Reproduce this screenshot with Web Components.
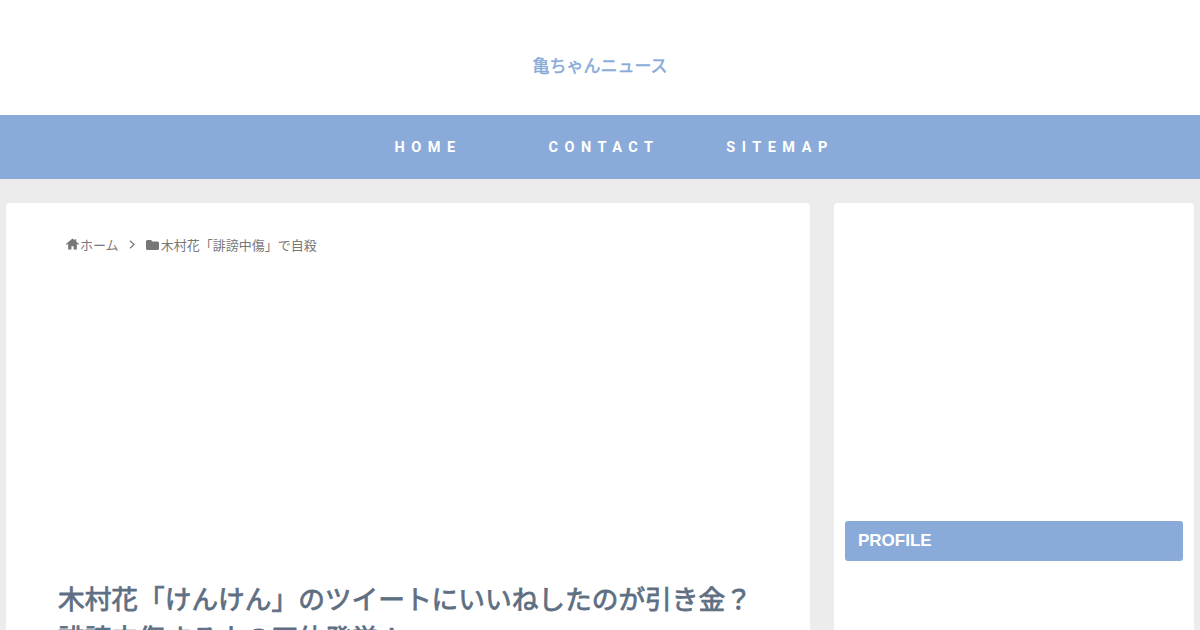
<!DOCTYPE html>
<html lang="ja">
<head>
<meta charset="utf-8">
<title>亀ちゃんニュース</title>
<style>
  html, body { margin: 0; height: 630px; overflow: hidden; }
  body { background: #ececec; font-family: "Liberation Sans", "Noto Sans CJK JP", sans-serif; }
</style>
</head>
<body>
<site-header>亀ちゃんニュース</site-header>
<nav-bar>
  <nav-item>HOME</nav-item>
  <nav-item>CONTACT</nav-item>
  <nav-item>SITEMAP</nav-item>
</nav-bar>
<page-layout>
  <main-card>
    <bread-crumb></bread-crumb>
    <h1 slot="title">木村花「けんけん」のツイートにいいねしたのが引き金？誹謗中傷する人の正体発覚！</h1>
  </main-card>
  <side-bar>
    <widget-title>PROFILE</widget-title>
  </side-bar>
</page-layout>

<script>
// Page header with the site name
class SiteHeader extends HTMLElement {
  constructor() {
    super();
    this.attachShadow({ mode: "open" }).innerHTML = `
      <style>
        :host {
          display: flex;
          justify-content: center;
          align-items: center;
          height: 115px;
          padding-top: 13px;
          box-sizing: border-box;
          background: #fff;
          color: #8aabd9;
          font-size: 17px;
          -webkit-text-stroke: 0.5px #8aabd9;
        }
      </style>
      <slot></slot>`;
  }
}

class NavBar extends HTMLElement {
  constructor() {
    super();
    this.attachShadow({ mode: "open" }).innerHTML = `
      <style>
        :host {
          display: flex;
          justify-content: center;
          height: 64px;
          padding-left: 8px;
          background: #8aabd9;
        }
      </style>
      <slot></slot>`;
  }
}

class NavItem extends HTMLElement {
  constructor() {
    super();
    this.attachShadow({ mode: "open" }).innerHTML = `
      <style>
        :host {
          display: flex;
          justify-content: center;
          align-items: center;
          width: 176px;
          color: #fff;
          font-family: Roboto, sans-serif;
          font-size: 14.5px;
          font-weight: 700;
          letter-spacing: 6.5px;
        }
      </style>
      <slot></slot>`;
  }
}

class PageLayout extends HTMLElement {
  constructor() {
    super();
    this.attachShadow({ mode: "open" }).innerHTML = `
      <style>
        :host {
          display: grid;
          grid-template-columns: 804px 360px;
          column-gap: 24px;
          padding: 24px 6px 0;
        }
      </style>
      <slot></slot>`;
  }
}

class MainCard extends HTMLElement {
  constructor() {
    super();
    this.attachShadow({ mode: "open" }).innerHTML = `
      <style>
        :host {
          display: block;
          height: 500px;
          box-sizing: border-box;
          padding: 31px 52px 0;
          background: #fff;
          border-radius: 4px;
        }
        ::slotted(h1) {
          margin: 327px 0 0;
          color: #5e6f83;
          font-size: 26.7px;
          line-height: 39px;
          font-weight: 400;
          -webkit-text-stroke: 0.8px #5e6f83;
        }
      </style>
      <slot></slot>
      <slot name="title"></slot>`;
  }
}

class BreadCrumb extends HTMLElement {
  constructor() {
    super();
    this.attachShadow({ mode: "open" }).innerHTML = `
      <style>
        :host {
          display: flex;
          align-items: center;
          height: 20px;
          padding-left: 8px;
          color: #777;
          font-size: 13px;
        }
        svg { flex: none; fill: #777; }
        .home { width: 13px; height: 12px; margin-right: 1px; }
        .chev { width: 6px; height: 9px; margin: 0 11px 0 10px; fill: none; stroke: #777; stroke-width: 1.2; }
        .folder { width: 13px; height: 11px; margin-right: 2px; }
      </style>
      <svg class="home" viewBox="0 0 24 22"><path d="M12 1 0 11l1.4 1.7L4 10.6V21h6v-6h4v6h6V10.6l2.6 2.1L24 11l-5-4.2V2h-3v2.3z"/></svg>
      <span>ホーム</span>
      <svg class="chev" viewBox="0 0 6 9"><path d="M1 .8 5 4.5 1 8.2"/></svg>
      <svg class="folder" viewBox="0 0 26 22"><path d="M3 2h7l3 3h10a3 3 0 0 1 3 3v11a3 3 0 0 1-3 3H3a3 3 0 0 1-3-3V5a3 3 0 0 1 3-3z"/></svg>
      <span>木村花「誹謗中傷」で自殺</span>`;
  }
}

class SideBar extends HTMLElement {
  constructor() {
    super();
    this.attachShadow({ mode: "open" }).innerHTML = `
      <style>
        :host {
          display: block;
          height: 500px;
          box-sizing: border-box;
          padding: 318px 11px 0;
          background: #fff;
          border-radius: 4px;
        }
      </style>
      <slot></slot>`;
  }
}

class WidgetTitle extends HTMLElement {
  constructor() {
    super();
    this.attachShadow({ mode: "open" }).innerHTML = `
      <style>
        :host {
          display: flex;
          align-items: center;
          height: 40px;
          padding-left: 13px;
          background: #8aabd9;
          border-radius: 3px;
          color: #fff;
          font-size: 17px;
          font-weight: 700;
        }
      </style>
      <slot></slot>`;
  }
}

customElements.define("site-header", SiteHeader);
customElements.define("nav-bar", NavBar);
customElements.define("nav-item", NavItem);
customElements.define("page-layout", PageLayout);
customElements.define("main-card", MainCard);
customElements.define("bread-crumb", BreadCrumb);
customElements.define("side-bar", SideBar);
customElements.define("widget-title", WidgetTitle);
</script>
</body>
</html>
